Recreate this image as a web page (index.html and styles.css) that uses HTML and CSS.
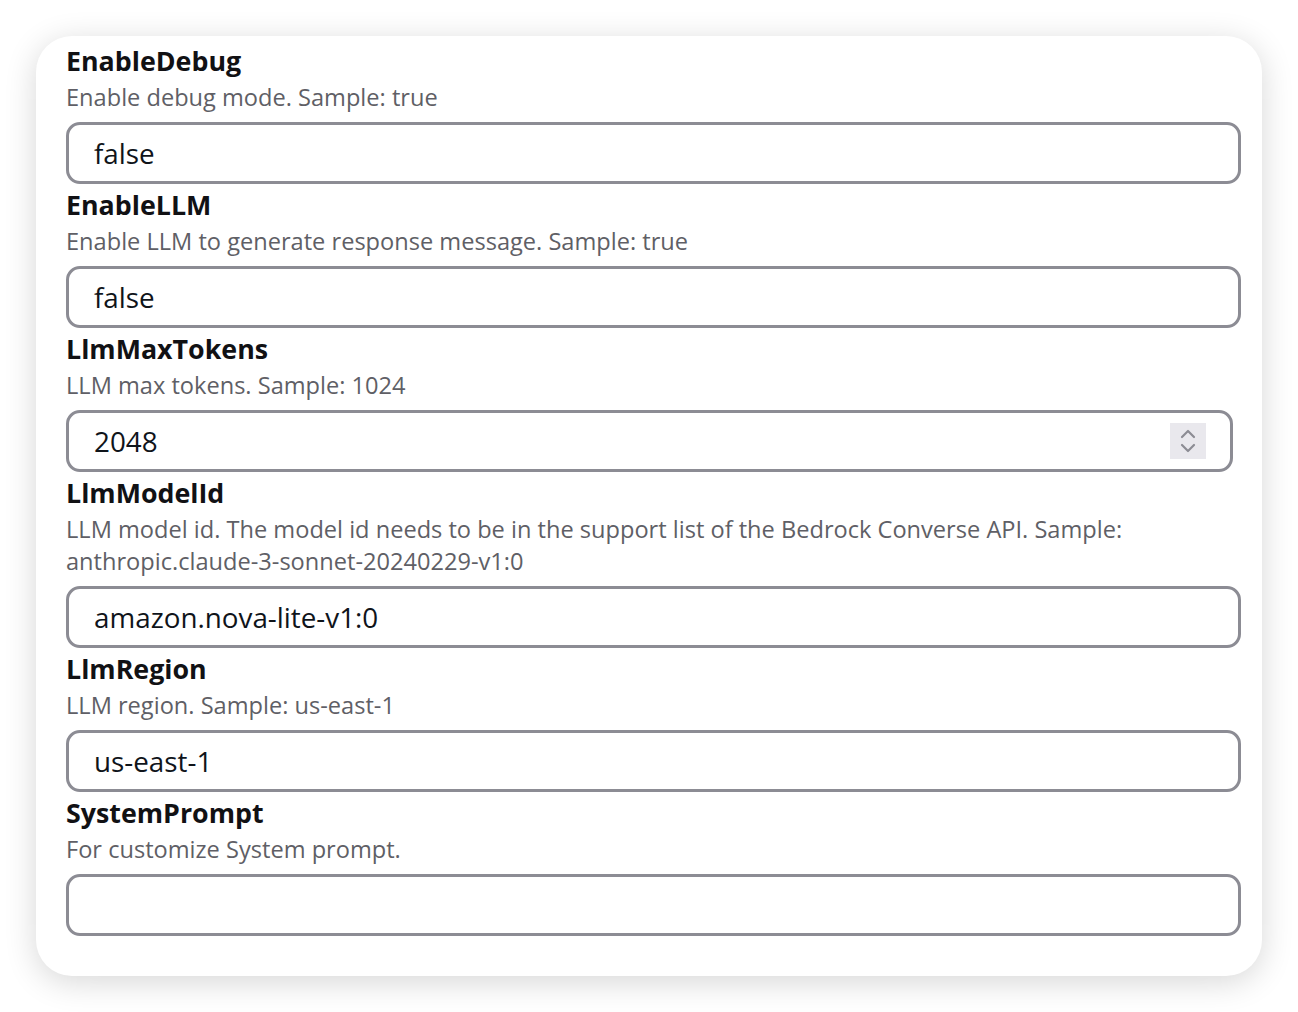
FILE: index.html
```html
<!DOCTYPE html>
<html>
<head>
<meta charset="utf-8">
<link rel="stylesheet" href="styles.css">
</head>
<body>
<div class="card">
  <div class="field">
    <div class="label">EnableDebug</div>
    <div class="desc">Enable debug mode. Sample: true</div>
    <div class="input">false</div>
  </div>
  <div class="field">
    <div class="label">EnableLLM</div>
    <div class="desc">Enable LLM to generate response message. Sample: true</div>
    <div class="input">false</div>
  </div>
  <div class="field">
    <div class="label">LlmMaxTokens</div>
    <div class="desc">LLM max tokens. Sample: 1024</div>
    <div class="input number"><span>2048</span>
      <span class="spinner">
        <svg width="16" height="26" viewBox="0 0 16 26"><path d="M2 9 L8 3 L14 9" fill="none" stroke="#8c8c94" stroke-width="2.2" stroke-linecap="round" stroke-linejoin="round"/><path d="M2 17 L8 23 L14 17" fill="none" stroke="#8c8c94" stroke-width="2.2" stroke-linecap="round" stroke-linejoin="round"/></svg>
      </span>
    </div>
  </div>
  <div class="field">
    <div class="label">LlmModelId</div>
    <div class="desc">LLM model id. The model id needs to be in the support list of the Bedrock Converse API. Sample: anthropic.claude-3-sonnet-20240229-v1:0</div>
    <div class="input">amazon.nova-lite-v1:0</div>
  </div>
  <div class="field">
    <div class="label">LlmRegion</div>
    <div class="desc">LLM region. Sample: us-east-1</div>
    <div class="input">us-east-1</div>
  </div>
  <div class="field">
    <div class="label">SystemPrompt</div>
    <div class="desc">For customize System prompt.</div>
    <div class="input"></div>
  </div>
</div>
</body>
</html>
```
FILE: styles.css
```css
html, body {
  margin: 0;
  padding: 0;
  background: #ffffff;
}
body {
  padding: 36px;
  font-family: "Open Sans", "Noto Sans", sans-serif;
}
.card {
  width: 1226px;
  height: 940px;
  box-sizing: border-box;
  background: #ffffff;
  border-radius: 36px;
  box-shadow: 0 6px 32px rgba(0, 0, 0, 0.16);
  padding: 5px 21px 0 30px;
}
.field {
  display: flex;
  flex-direction: column;
  padding-bottom: 1px;
}
.label {
  font-size: 26.8px;
  font-weight: 700;
  line-height: 40px;
  color: #111114;
}
.desc {
  font-size: 23.6px;
  line-height: 32px;
  color: #5f5f66;
  padding-right: 60px;
}
.input {
  margin-top: 9px;
  height: 62px;
  box-sizing: border-box;
  border: 3px solid #8c8c94;
  border-radius: 14px;
  padding: 0 25px;
  font-size: 27.8px;
  color: #0f141a;
  display: flex;
  align-items: center;
}
.input.number {
  margin-right: 8px;
  justify-content: space-between;
  padding-right: 24px;
}
.spinner {
  width: 36px;
  height: 36px;
  background: #e9e8ed;
  display: flex;
  align-items: center;
  justify-content: center;
}
```
